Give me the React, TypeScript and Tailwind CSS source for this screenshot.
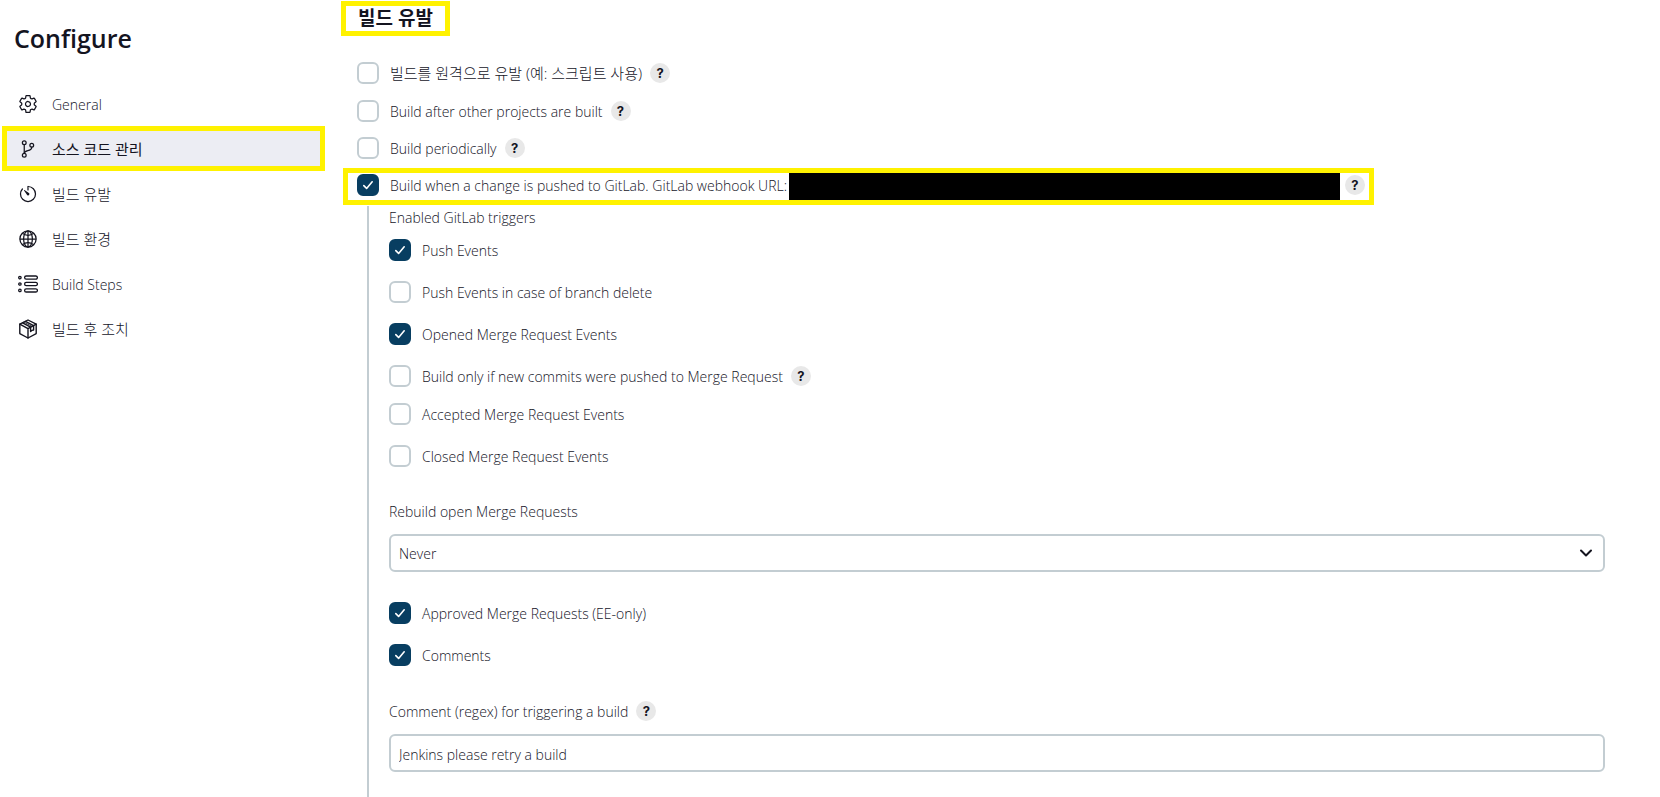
import React from "react";
import { IoSettingsOutline, IoGitBranchOutline, IoTimerOutline, IoGlobeOutline } from "react-icons/io5";

function ListIcon() {
  return (
    <svg viewBox="0 0 20 20" className="size-5" fill="none" stroke="currentColor" strokeWidth="1.3" aria-hidden="true">
      {[3.6, 10, 16.4].map((y) => (
        <g key={y}>
          <rect x="6.6" y={y - 1.6} width="12.8" height="3.2" rx="1.6" />
          <circle cx="1.9" cy={y} r="1.2" />
        </g>
      ))}
    </svg>
  );
}

function PackageIcon() {
  return (
    <svg viewBox="0 0 20 20" className="size-5" fill="none" stroke="currentColor" strokeWidth="1.4" strokeLinejoin="round" strokeLinecap="round" aria-hidden="true">
      <path d="M10 1 18.2 5.2V14.6L10 19 1.8 14.6V5.2Z" />
      <path d="M1.8 5.2 10 9.6 18.2 5.2M10 9.6V19" />
      <path d="M4.6 3.8 12.6 8.2V12.6L13.8 11.4 15.6 11V6.6L7.4 2.4" />
      <path d="M6 3.1 14 7.4" strokeWidth="0.8" />
    </svg>
  );
}

const navItems = [
  { label: "General", icon: <IoSettingsOutline className="size-5" /> },
  { label: "소스 코드 관리", icon: <IoGitBranchOutline className="size-5" />, korean: true, active: true },
  { label: "빌드 유발", icon: <IoTimerOutline className="size-5" />, korean: true },
  { label: "빌드 환경", icon: <IoGlobeOutline className="size-5" />, korean: true },
  { label: "Build Steps", icon: <ListIcon /> },
  { label: "빌드 후 조치", icon: <PackageIcon />, korean: true },
];

function Help() {
  return (
    <button type="button" aria-label="Help" className="flex size-5 shrink-0 items-center justify-center rounded-full bg-[#e8e8e8] font-[Inter] text-[13px] leading-5 font-bold">
      ?
    </button>
  );
}

type CheckProps = { label: string; checked?: boolean; help?: boolean; korean?: boolean };

function Check({ label, checked = false, help = false, korean = false }: CheckProps) {
  return (
    <div className="flex h-[22px] items-center gap-2">
      <label className="flex items-center gap-[11px] whitespace-nowrap">
        <span className="grid size-[22px] shrink-0">
          <input
            type="checkbox"
            defaultChecked={checked}
            className="peer col-start-1 row-start-1 size-[22px] appearance-none rounded-md border-2 border-[#c3cdd2] bg-white checked:border-[#083e61] checked:bg-[#083e61]"
          />
          <svg viewBox="0 0 22 22" className="pointer-events-none col-start-1 row-start-1 hidden size-[22px] peer-checked:block" fill="none" stroke="white" strokeWidth="1.6" strokeLinecap="round" strokeLinejoin="round" aria-hidden="true">
            <path d="M6.8 11.6 9.6 14.4 15.2 7.8" />
          </svg>
        </span>
        <span className={korean ? "text-[15px] leading-5" : "pt-0.5"}>{label}</span>
      </label>
      {help && <Help />}
    </div>
  );
}

export default function App() {
  return (
    <div className="flex min-h-screen bg-white font-['Open_Sans','Noto_Sans_CJK_KR',sans-serif] text-sm leading-5 font-light text-[#14141f]">
      <aside className="w-[341px] shrink-0 pl-[2px]">
        <h1 className="mt-[22px] pl-3 text-[25px] leading-8 font-semibold">Configure</h1>
        <nav className="mt-[27px] flex w-[323px] flex-col">
          {navItems.map((item) => (
            <a
              key={item.label}
              href="#"
              className={
                item.active
                  ? "flex h-[45px] items-center gap-[14px] border-[5px] border-[#fff200] bg-[#ecedf3] px-[11px] font-normal"
                  : "flex h-[45px] items-center gap-[14px] px-4"
              }
            >
              {item.icon}
              <span className={item.korean ? "text-[15px] leading-5" : "pt-0.5"}>{item.label}</span>
            </a>
          ))}
        </nav>
      </aside>

      <main className="flex min-w-0 flex-1 flex-col pt-px pr-[55px]">
        <h2 className="h-[35px] w-fit border-[5px] border-[#fff200] px-3 text-[19px] leading-6 font-bold">빌드 유발</h2>
        <div className="mt-[26px] flex flex-col gap-4 pl-4">
          <Check label="빌드를 원격으로 유발 (예: 스크립트 사용)" korean help />
          <div className="flex flex-col gap-[15px]">
            <Check label="Build after other projects are built" help />
            <Check label="Build periodically" help />
          </div>
        </div>
        <div className="mt-[9px] ml-[2px] flex h-[37px] max-w-[1031px] items-start border-[5px] border-[#fff200] pr-1 pl-[9px]">
          <div className="pt-px">
            <Check label="Build when a change is pushed to GitLab. GitLab webhook URL:" checked />
          </div>
          <div className="mr-[5px] ml-[2px] h-[27px] flex-1 bg-black" />
          <div className="pt-0.5">
            <Help />
          </div>
        </div>

        <section className="mt-px ml-[26px] flex flex-1 flex-col border-l-2 border-[#c3cdd2] pl-5">
          <div className="pt-0.5">Enabled GitLab triggers</div>
          <div className="mt-[11px] flex flex-col gap-5">
            <Check label="Push Events" checked />
            <Check label="Push Events in case of branch delete" />
            <Check label="Opened Merge Request Events" checked />
            <Check label="Build only if new commits were pushed to Merge Request" help />
          </div>
          <div className="mt-4 flex flex-col gap-5">
            <Check label="Accepted Merge Request Events" />
            <Check label="Closed Merge Request Events" />
          </div>
          <label htmlFor="rebuild" className="mt-[35px]">Rebuild open Merge Requests</label>
          <div className="mt-3 grid items-center">
            <select id="rebuild" className="col-start-1 row-start-1 h-[38px] w-full appearance-none rounded-md border-2 border-[#c3cdd2] bg-white px-2 pt-0.5">
              <option>Never</option>
            </select>
            <svg viewBox="0 0 14 14" className="pointer-events-none col-start-1 row-start-1 mr-3 size-[14px] justify-self-end" fill="none" stroke="currentColor" strokeWidth="2" strokeLinecap="round" strokeLinejoin="round" aria-hidden="true">
              <path d="M2 4.5 7 9.5 12 4.5" />
            </svg>
          </div>
          <div className="mt-[30px] flex flex-col gap-5">
            <Check label="Approved Merge Requests (EE-only)" checked />
            <Check label="Comments" checked />
          </div>
          <div className="mt-[35px] flex h-5 items-center gap-2">
            <label htmlFor="comment" className="pt-0.5">Comment (regex) for triggering a build</label>
            <Help />
          </div>
          <input id="comment" type="text" defaultValue="Jenkins please retry a build" className="mt-[13px] h-[38px] w-full rounded-md border-2 border-[#c3cdd2] bg-white px-2 pt-0.5" />
        </section>
      </main>
    </div>
  );
}
